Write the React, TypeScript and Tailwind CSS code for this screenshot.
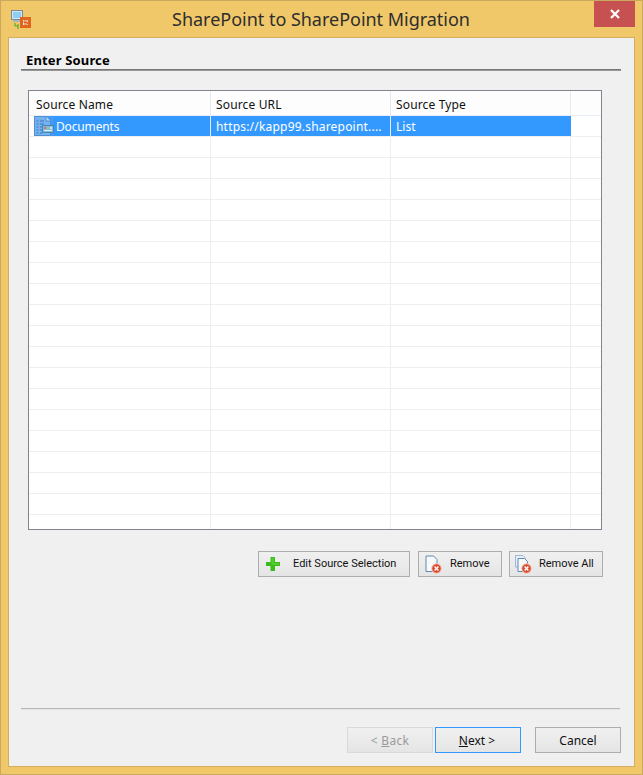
import React from "react";

const font = { fontFamily: '"Noto Sans", "Open Sans", sans-serif' };

function AppIcon() {
  return (
    <svg width="22" height="20" viewBox="0 0 22 20" className="block">
      <rect x="0.5" y="0.5" width="11" height="9" fill="#cfe6f7" stroke="#7d8a96" />
      <rect x="2" y="2" width="8" height="6" fill="#8fcdf2" />
      <rect x="2" y="10" width="8" height="2" fill="#a9b4bb" />
      <path d="M4 13v3M4 16h3M7 14v5" stroke="#4caf2e" strokeWidth="1.2" fill="none" />
      <rect x="9" y="7" width="11" height="11" fill="#e2651c" />
      <rect x="12" y="10" width="5" height="5" fill="#f7e7d8" />
      <path d="M16.5 11h-3.5v1.5h3.5v1.5h-3.5" stroke="#d9601c" fill="none" />
    </svg>
  );
}

function DocListIcon() {
  return (
    <svg width="20" height="20" viewBox="0 0 20 20" className="block">
      <rect width="20" height="20" fill="#3f9bf5" />
      <path d="M0.5 0.5H12L16.5 4.5V19.5H0.5Z" fill="#74b3f0" stroke="#4f8fd0" />
      <path d="M12 0.5V5H16.5" fill="#b9d8f5" stroke="#4f8fd0" />
      <path d="M2.5 5h2M6 5h4M2.5 8h2M6 8h4M2.5 11h2M6 11h2M2.5 14h2M6 14h2M2.5 17h2M6 17h2" stroke="#3f78b8" strokeWidth="1.2" />
      <rect x="8.5" y="9.5" width="11" height="7" fill="#7fbad6" stroke="#4a86b8" />
      <rect x="10" y="11" width="2" height="2" fill="#e4637d" />
      <rect x="13" y="11" width="2" height="2" fill="#7ed09a" />
      <rect x="16" y="11" width="2" height="2" fill="#e4e4f0" />
      <rect x="10" y="14" width="8" height="1" fill="#e0f0f8" />
    </svg>
  );
}

function PlusIcon() {
  return (
    <svg width="16" height="16" viewBox="0 0 16 16" className="block">
      <path d="M5.5 1h4.5v5H15v4h-5v5H5.5v-5H1V6h4.5Z" fill="#3dbb1c" />
      <path d="M6.5 2h2.5v5H14v2H6.5z" fill="#4fcf2c" />
    </svg>
  );
}

function DocX({ multi }: { multi?: boolean }) {
  return (
    <svg width="17" height="19" viewBox="0 0 17 19" className="block">
      {multi && <path d="M0.5 0.5H8L10 2.5V12H0.5Z" fill="#e6eef6" stroke="#9fb8d2" />}
      <path
        d={multi ? "M3 3.5H9.5L12.5 6.5V16.5H3Z" : "M1 1H8.5L12 4.5V16.5H1Z"}
        fill="#f7f9fb"
        stroke="#5c8ab5"
      />
      <circle cx="11.5" cy="13.5" r="4.8" fill="#dd4b2e" stroke="#f3d3c6" />
      <path d="M9.6 11.6l3.8 3.8M13.4 11.6l-3.8 3.8" stroke="#fff" strokeWidth="1.4" />
    </svg>
  );
}

const btn =
  "h-[26px] shrink-0 flex items-center border border-[#adadad] bg-gradient-to-b from-[#f0f0f0] to-[#e5e5e5] text-[11px] font-['Roboto'] text-[#111]";
const navBtn =
  "w-[86px] h-[26px] shrink-0 flex items-center justify-center border bg-gradient-to-b from-[#f0f0f0] to-[#e5e5e5] text-[12px] leading-[26px] pt-[1px]";

export default function App() {
  const rows = Array.from({ length: 19 });
  return (
    <div
      style={font}
      className="w-[643px] h-[775px] flex flex-col bg-[#f0c869] border border-[#c9a95c] overflow-hidden"
    >
      <div className="h-[36px] shrink-0 flex items-start relative">
        <div className="absolute left-[10px] top-[9px]">
          <AppIcon />
        </div>
        <div className="flex-1 text-center text-[18px] leading-[37px] text-[#2e2e2e] tracking-[-0.02px] pr-[1px]">
          SharePoint to SharePoint Migration
        </div>
        <div className="absolute left-[593px] top-0 w-[41px] h-[26px] bg-[#c75050] flex items-center justify-center">
          <svg width="10" height="10" viewBox="0 0 10 10" className="block">
            <path d="M1 1L9 9M9 1L1 9" stroke="#fff" strokeWidth="2.2" />
          </svg>
        </div>
      </div>

      <div className="ml-[7px] mr-[7px] mb-[7px] flex-1 flex flex-col bg-[#f0f0f0] border border-[#d3ae60] px-[12px] min-h-0">
        <div className="mt-[13px] pl-[5px] h-[18px] text-[13px] leading-[18px] font-bold text-black tracking-[0.15px]">Enter Source</div>
        <div className="h-[2px] w-[600px] bg-gradient-to-b from-[#666] to-[#a9a9a9]" />

        <div className="mt-[19px] ml-[7px] w-[574px] h-[440px] border border-[#83838f] bg-white flex flex-col overflow-hidden text-[12px]">
          <div className="h-[25px] shrink-0 flex border-b border-[#e8eef7] bg-[#fdfdfd] text-[#111] tracking-[0.15px]">
            <div className="w-[182px] border-r border-[#e3e9f2] pl-[7px] leading-[27px]">Source Name</div>
            <div className="w-[180px] border-r border-[#e3e9f2] pl-[5px] leading-[27px]">Source URL</div>
            <div className="w-[180px] border-r border-[#e3e9f2] pl-[5px] leading-[27px]">Source Type</div>
          </div>
          <div className="h-[21px] shrink-0 flex border-b border-[#eeeeee]">
            <div className="w-[182px] flex border-r border-[#e3eefa] pl-[5px]">
              <div className="shrink-0">
                <DocListIcon />
              </div>
              <div className="flex-1 bg-[#3399ff] text-white pl-[2px] leading-[21px] tracking-[-0.15px]">Documents</div>
            </div>
            <div className="w-[180px] bg-[#3399ff] text-white border-r border-[#e3eefa] pl-[5px] leading-[21px] whitespace-nowrap overflow-hidden tracking-[0.2px]">
              https://kapp99.sharepoint....
            </div>
            <div className="w-[180px] bg-[#3399ff] text-white pl-[5px] leading-[21px]">List</div>
          </div>
          {rows.map((_, i) => (
            <div key={i} className="h-[21px] shrink-0 flex border-b border-[#eeeeee]">
              <div className="w-[182px] border-r border-[#eeeeee]" />
              <div className="w-[180px] border-r border-[#eeeeee]" />
              <div className="w-[180px] border-r border-[#eeeeee]" />
            </div>
          ))}
        </div>

        <div className="mt-[21px] flex ml-[237px]">
          <div className={`${btn} w-[152px]`}>
            <span className="ml-[6px]"><PlusIcon /></span>
            <span className="ml-[12px]">Edit Source Selection</span>
          </div>
          <div className={`${btn} w-[84px] ml-[8px]`}>
            <span className="ml-[6px]"><DocX /></span>
            <span className="ml-[8px]">Remove</span>
          </div>
          <div className={`${btn} w-[94px] ml-[7px]`}>
            <span className="ml-[5px]"><DocX multi /></span>
            <span className="ml-[7px]">Remove All</span>
          </div>
        </div>

        <div className="mt-auto h-[2px] w-[599px] bg-gradient-to-b from-[#a0a0a0] to-[#ffffff]" />
        <div className="mt-[17px] mb-[13px] flex w-[600px]">
          <div className={`${navBtn} ml-[326px] border-[#d9d9d9] text-[#9a9a9a] tracking-[0.3px]`}>
            &lt;&nbsp;<span className="underline">B</span>ack
          </div>
          <div className={`${navBtn} ml-[2px] border-[#3399ff] text-[#111] pr-[2px]`}>
            <span className="underline">N</span>ext &gt;
          </div>
          <div className={`${navBtn} ml-[14px] border-[#adadad] text-[#111]`}>Cancel</div>
        </div>
      </div>
    </div>
  );
}
